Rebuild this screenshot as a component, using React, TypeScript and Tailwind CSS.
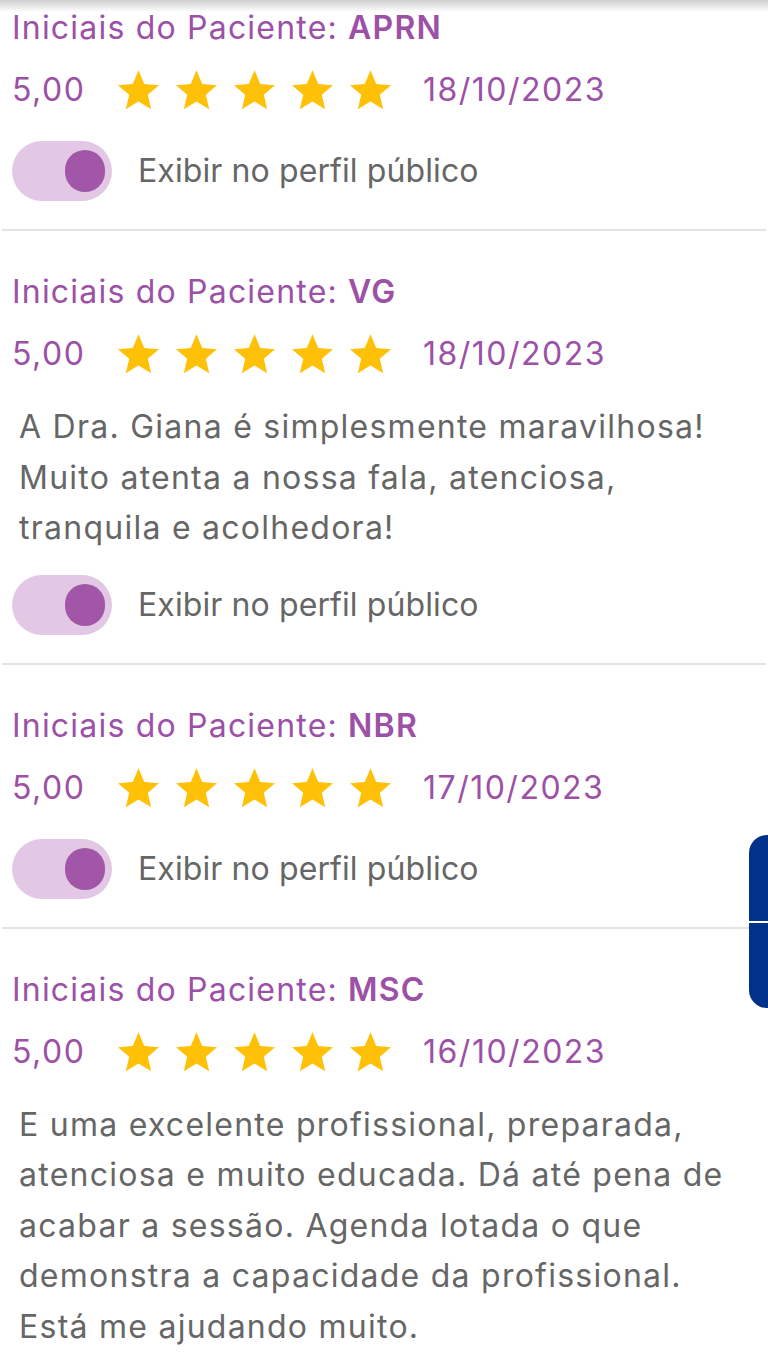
import React from 'react';

type Review = {
	initials: string;
	rating: string;
	date: string;
	comment?: string[];
};

// linhas do comentário quebradas como no app
const reviews: Review[] = [
	{ initials: 'APRN', rating: '5,00', date: '18/10/2023' },
	{
		initials: 'VG',
		rating: '5,00',
		date: '18/10/2023',
		comment: ['A Dra. Giana é simplesmente maravilhosa!', 'Muito atenta a nossa fala, atenciosa,', 'tranquila e acolhedora!'],
	},
	{ initials: 'NBR', rating: '5,00', date: '17/10/2023' },
	{
		initials: 'MSC',
		rating: '5,00',
		date: '16/10/2023',
		comment: [
			'E uma excelente profissional, preparada,',
			'atenciosa e muito educada. Dá até pena de',
			'acabar a sessão. Agenda lotada o que',
			'demonstra a capacidade da profissional.',
			'Está me ajudando muito.',
		],
	},
];

function Star() {
	return (
		<svg viewBox="2 2 20 19.2" className="w-[41px] h-[40px]" fill="#ffc107">
			<path d="M12 17.27 18.18 21l-1.64-7.03L22 9.24l-7.19-.61L12 2 9.19 8.63 2 9.24l5.46 4.73L5.82 21z" />
		</svg>
	);
}

function Toggle() {
	return (
		<div className="w-[100px] h-[60px] rounded-full bg-[#e2c8e4] flex items-center justify-end pr-[7px]">
			<div className="w-[40px] h-[42px] rounded-full bg-[#a156a8]" />
		</div>
	);
}

function ReviewItem({ review, first }: { review: Review; first: boolean }) {
	return (
		<div className={first ? 'pt-[3px]' : 'pt-[36px]'}>
			<div className="h-[50px] flex items-center pl-[12px] text-[32px] tracking-[1.2px] text-[#9c50a6]">
				<span>Iniciais do Paciente:&nbsp;</span>
				<span className="font-semibold">{review.initials}</span>
			</div>
			<div className="h-[50px] mt-[12px] flex items-center pl-[12px] text-[32px] tracking-[1.5px] text-[#9c50a6]">
				<span className="w-[106px]">{review.rating}</span>
				<div className="flex gap-[17px]">
					{[0, 1, 2, 3, 4].map((i) => (
						<Star key={i} />
					))}
				</div>
				<span className="ml-[32px]">{review.date}</span>
			</div>
			{review.comment && (
				<div className="mt-[23px] pl-[19px] text-[32px] tracking-[1.25px] leading-[50.5px] text-[#666666] whitespace-nowrap">
					{review.comment.map((line, i) => (
						<p key={i}>{line}</p>
					))}
				</div>
			)}
			<div className={`${review.comment ? 'mt-[21px]' : 'mt-[26px]'} flex items-center pl-[12px] gap-[26px]`}>
				<Toggle />
				<span className="text-[32px] tracking-[0.1px] text-[#666666]">Exibir no perfil público</span>
			</div>
			<div className={`${review.comment ? 'mt-[28px]' : 'mt-[28px]'} h-[2px] bg-[#e3e3e3] mx-[2px]`} />
		</div>
	);
}

export default function App() {
	return (
		<div
			className="relative w-[768px] h-[1365px] overflow-hidden bg-white"
			style={{ fontFamily: 'Inter, "Noto Sans", sans-serif' }}
		>
			<div className="absolute top-0 left-0 right-0 h-[12px] bg-gradient-to-b from-[#cfcfcf] to-white/0" />
			{reviews.map((r, i) => (
				<ReviewItem key={i} review={r} first={i === 0} />
			))}
			<div className="absolute right-0 top-[835px] w-[19px] h-[173px] rounded-l-[18px] bg-[#023189] flex flex-col">
				<div className="h-[86px]" />
				<div className="h-[2px] bg-white" />
			</div>
		</div>
	);
}
